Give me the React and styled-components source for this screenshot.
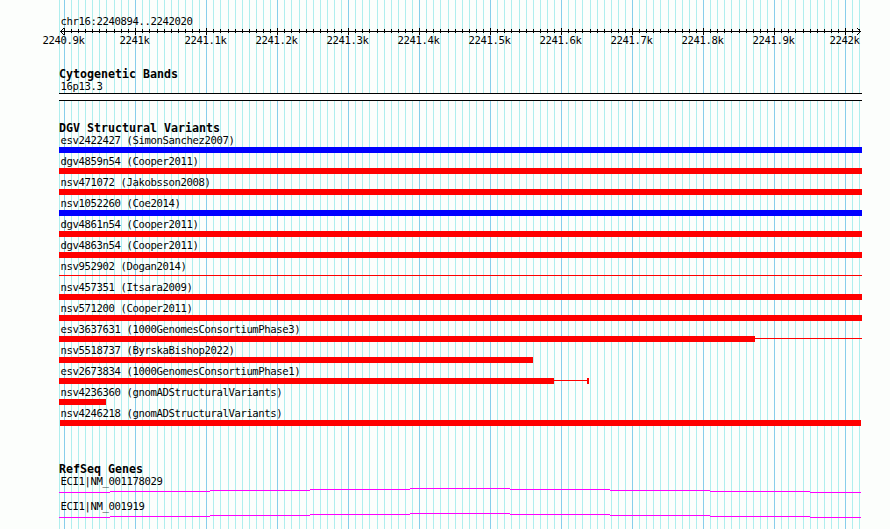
import React from 'react';
import styled, { createGlobalStyle } from 'styled-components';

const Global = createGlobalStyle`
  html, body { margin: 0; padding: 0; background: #fcfefc; overflow: hidden; }
`;

const Page = styled.main`
  position: relative;
  width: 890px;
  height: 529px;
  overflow: hidden;
  background: #fcfefc;
  color: #000;
  font-family: "DejaVu Sans Mono", monospace;
`;
const Grid = styled.svg`
  position: absolute;
  inset: 0;
`;
const Content = styled.div`
  position: relative;
  width: 803px;
  padding: 15px 0 0 59px;
`;
const Label = styled.div`
  height: 13px;
  padding-left: 1.5px;
  font-size: 10.6px;
  line-height: 13px;
  letter-spacing: -0.382px;
  white-space: pre;
`;
const Title = styled.h2`
  margin: 0;
  height: 12px;
  font-size: 11.63px;
  line-height: 12px;
  font-weight: bold;
  white-space: pre;
`;
const Ruler = styled.svg`
  display: block;
  height: 7px;
  width: 803px;
`;
const Ticks = styled.div`
  display: grid;
  grid-template-columns: repeat(12, 71px);
  margin: -1px 0 0 -31px;
  height: 14px;
`;
const Tick = styled(Label)`
  padding: 0;
  text-align: center;
`;
const Section = styled.section`
  margin-top: ${(p) => p.$gap}px;
`;
const Band = styled.div`
  box-sizing: border-box;
  height: 8px;
  border: solid #000;
  border-width: 1px 0;
  background: #fff;
`;
const Feature = styled.div`
  height: 21px;
`;
const Track = styled.div`
  display: flex;
  align-items: center;
  height: 6px;
  padding-left: ${(p) => p.$start || 0}px;
`;
const Bar = styled.span`
  width: ${(p) => p.$w}px;
  height: 6px;
  background: ${(p) => p.$color || '#f00'};
`;
const Range = styled.span`
  width: ${(p) => p.$w}px;
  height: 1px;
  margin-bottom: 1px;
  background: #f00;
`;
const Gene = styled.div`
  height: 25px;
`;
const Transcript = styled.svg`
  display: block;
  width: 803px;
  height: 5px;
`;

const jumps = [7, 3, 3, 3, 4, 4, 4, 4, 5, 5, 4, 9];
const lines = jumps.flatMap((jump, i) =>
  Array.from({ length: 10 }, (_, k) => ({ x: 64 + 71 * i + 7 * k + (k >= jump ? 1 : 0), major: k === 0 }))
).filter((l) => l.x < 861);

const positions = ['2240.9k', '2241k', '2241.1k', '2241.2k', '2241.3k', '2241.4k', '2241.5k', '2241.6k', '2241.7k', '2241.8k', '2241.9k', '2242k'];

const variants = [
  { name: 'esv2422427 (SimonSanchez2007)', w: 803, color: '#00f' },
  { name: 'dgv4859n54 (Cooper2011)', w: 803 },
  { name: 'nsv471072 (Jakobsson2008)', w: 803 },
  { name: 'nsv1052260 (Coe2014)', w: 803, color: '#00f' },
  { name: 'dgv4861n54 (Cooper2011)', w: 803 },
  { name: 'dgv4863n54 (Cooper2011)', w: 803 },
  { name: 'nsv952902 (Dogan2014)', w: 0, range: 803 },
  { name: 'nsv457351 (Itsara2009)', w: 803 },
  { name: 'nsv571200 (Cooper2011)', w: 803 },
  { name: 'esv3637631 (1000GenomesConsortiumPhase3)', w: 696, range: 107 },
  { name: 'nsv5518737 (ByrskaBishop2022)', w: 474 },
  { name: 'esv2673834 (1000GenomesConsortiumPhase1)', w: 495, range: 33, cap: 2 },
  { name: 'nsv4236360 (gnomADStructuralVariants)', w: 47 },
  { name: 'nsv4246218 (gnomADStructuralVariants)', start: 1, w: 801 },
];

const segments = [[0, 51, 4], [51, 100, 3], [151, 100, 2], [251, 100, 1], [351, 100, 0], [451, 100, 1], [551, 100, 2], [651, 100, 3], [751, 51, 4]];

export default function App() {
  return (
    <Page>
      <Global />
      <Grid width="890" height="529" shapeRendering="crispEdges">
        <rect x="59" width="1" height="529" fill="#afeeee" />
        {lines.map((l) => (
          <rect key={l.x} x={l.x} width="1" height="529" fill={l.major ? '#87ceeb' : '#afeeee'} />
        ))}
      </Grid>
      <Content>
        <Label>chr16:2240894..2242020</Label>
        <Ruler viewBox="59 28 803 7" shapeRendering="crispEdges">
          <rect x="60" y="31" width="801" height="1" />
          {lines.map((l) => (
            <rect key={l.x} x={l.x} y={l.major ? 28 : 29} width="1" height={l.major ? 7 : 4} />
          ))}
          {[1, 2, 3].map((d) => (
            <g key={d}>
              <rect x={60 + d} y={31 - d} width="1" height="1" />
              <rect x={60 + d} y={31 + d} width="1" height="1" />
              <rect x={860 - d} y={31 - d} width="1" height="1" />
              <rect x={860 - d} y={31 + d} width="1" height="1" />
            </g>
          ))}
        </Ruler>
        <Ticks>{positions.map((p) => <Tick key={p}>{p}</Tick>)}</Ticks>

        <Section $gap={20}>
          <Title>Cytogenetic Bands</Title>
          <Label>16p13.3</Label>
          <Band />
        </Section>

        <Section $gap={21}>
          <Title>DGV Structural Variants</Title>
          {variants.map((v) => (
            <Feature key={v.name}>
              <Label>{v.name}</Label>
              <Track $start={v.start}>
                <Bar $w={v.w} $color={v.color} />
                {v.range && <Range $w={v.range} />}
                {v.cap && <Bar $w={v.cap} />}
              </Track>
            </Feature>
          ))}
        </Section>

        <Section $gap={35}>
          <Title>RefSeq Genes</Title>
          {['ECI1|NM_001178029', 'ECI1|NM_001919'].map((g) => (
            <Gene key={g}>
              <Label>{g}</Label>
              <Transcript viewBox="0 0 803 5" shapeRendering="crispEdges">
                {segments.map(([x, w, y]) => <rect key={x} x={x} y={y} width={w} height="1" fill="#f0f" />)}
              </Transcript>
            </Gene>
          ))}
        </Section>
      </Content>
    </Page>
  );
}
